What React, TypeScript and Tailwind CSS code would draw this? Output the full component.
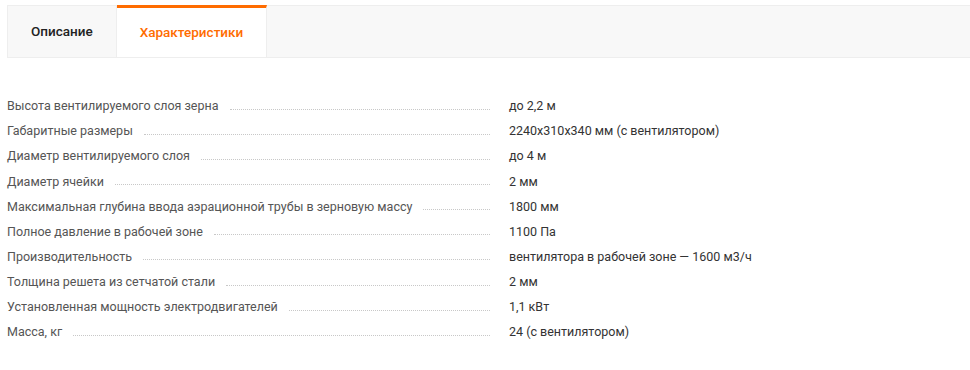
import React, { useState } from "react";

interface Spec {
  name: string;
  value: string;
}

const specs: Spec[] = [
  { name: "Высота вентилируемого слоя зерна", value: "до 2,2 м" },
  { name: "Габаритные размеры", value: "2240x310x340 мм (с вентилятором)" },
  { name: "Диаметр вентилируемого слоя", value: "до 4 м" },
  { name: "Диаметр ячейки", value: "2 мм" },
  {
    name: "Максимальная глубина ввода аэрационной трубы в зерновую массу",
    value: "1800 мм",
  },
  { name: "Полное давление в рабочей зоне", value: "1100 Па" },
  { name: "Производительность", value: "вентилятора в рабочей зоне — 1600 м3/ч" },
  { name: "Толщина решета из сетчатой стали", value: "2 мм" },
  { name: "Установленная мощность электродвигателей", value: "1,1 кВт" },
  { name: "Масса, кг", value: "24 (с вентилятором)" },
];

const tabs = ["Описание", "Характеристики"];

const App: React.FC = () => {
  const [active, setActive] = useState(1);

  return (
    <div
      className="w-[970px] h-[370px] bg-white pt-[5px] pl-[7px]"
      style={{ fontFamily: "Roboto, 'Liberation Sans', sans-serif" }}
    >
      {/* Tabs */}
      <div className="flex h-[53px] bg-[#f8f8f8] border border-[#eeeeee] border-r-0">
        {tabs.map((tab, i) => (
          <button
            key={tab}
            type="button"
            onClick={() => setActive(i)}
            className={
              i === active
                ? "h-[52px] -mt-px px-[23px] bg-white border-t-[3px] border-t-[#ff6c00] border-r border-r-[#eeeeee] text-[13.5px] font-medium text-[#ff6c00]"
                : "h-full px-[23px] border-r border-r-[#eeeeee] text-[13.5px] font-medium text-[#222222]"
            }
          >
            {tab}
          </button>
        ))}
      </div>

      {/* Specs table */}
      <div className="mt-[36px] flex flex-col">
        {specs.map((s) => (
          <div key={s.name} className="flex items-center h-[25.15px] text-[12.5px]">
            <div className="w-[483px] flex items-center shrink-0">
              <span className="text-[#555555] whitespace-nowrap">{s.name}</span>
              <span className="flex-1 ml-[11px] mt-[5px] border-b border-dotted border-[#c8c8c8]" />
            </div>
            <span className="ml-[19px] text-[#333333] whitespace-nowrap">{s.value}</span>
          </div>
        ))}
      </div>
    </div>
  );
};

export default App;
